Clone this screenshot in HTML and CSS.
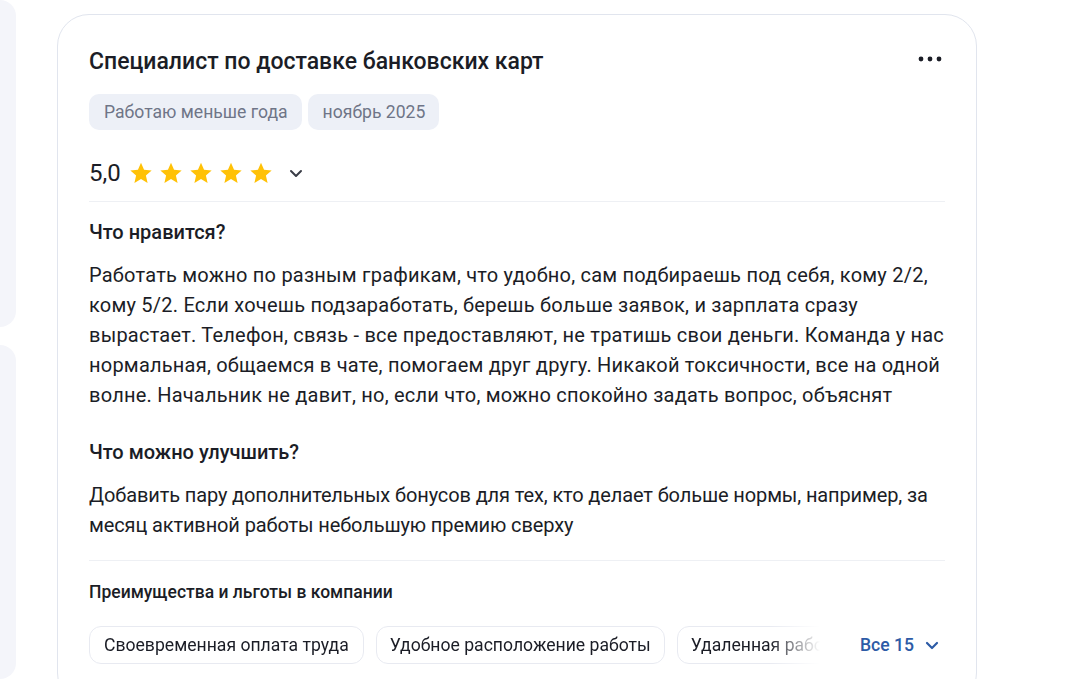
FILE: index.html
```html
<!DOCTYPE html>
<html lang="ru">
<head>
<meta charset="utf-8">
<link rel="stylesheet" href="styles.css">
</head>
<body>
<div class="page">
  <div class="side">
    <div class="side-card side-card-top"></div>
    <div class="side-card side-card-bottom"></div>
  </div>
  <div class="main">
    <article class="review">
      <header class="review-head">
        <h2 class="review-title">Специалист по доставке банковских карт</h2>
        <button class="more" aria-label="Ещё">
          <svg width="24" height="6" viewBox="0 0 24 6"><circle cx="3" cy="3" r="2.4" fill="#1b1d26"/><circle cx="12" cy="3" r="2.4" fill="#1b1d26"/><circle cx="21" cy="3" r="2.4" fill="#1b1d26"/></svg>
        </button>
      </header>
      <div class="tags">
        <span class="tag">Работаю меньше года</span>
        <span class="tag">ноябрь 2025</span>
      </div>
      <div class="rating">
        <span class="rating-value">5,0</span>
        <span class="stars">
          <svg class="star" viewBox="0 0 24 24"><path d="M12 1.8l3.05 7.03 7.6.68-5.75 5.02 1.7 7.47L12 18.1l-6.6 3.9 1.7-7.47-5.75-5.02 7.6-.68z" fill="#ffc107"/></svg>
          <svg class="star" viewBox="0 0 24 24"><path d="M12 1.8l3.05 7.03 7.6.68-5.75 5.02 1.7 7.47L12 18.1l-6.6 3.9 1.7-7.47-5.75-5.02 7.6-.68z" fill="#ffc107"/></svg>
          <svg class="star" viewBox="0 0 24 24"><path d="M12 1.8l3.05 7.03 7.6.68-5.75 5.02 1.7 7.47L12 18.1l-6.6 3.9 1.7-7.47-5.75-5.02 7.6-.68z" fill="#ffc107"/></svg>
          <svg class="star" viewBox="0 0 24 24"><path d="M12 1.8l3.05 7.03 7.6.68-5.75 5.02 1.7 7.47L12 18.1l-6.6 3.9 1.7-7.47-5.75-5.02 7.6-.68z" fill="#ffc107"/></svg>
          <svg class="star" viewBox="0 0 24 24"><path d="M12 1.8l3.05 7.03 7.6.68-5.75 5.02 1.7 7.47L12 18.1l-6.6 3.9 1.7-7.47-5.75-5.02 7.6-.68z" fill="#ffc107"/></svg>
        </span>
        <svg class="chev" width="14" height="9" viewBox="0 0 14 9"><path d="M2 2l5 5 5-5" fill="none" stroke="#3a3d47" stroke-width="2" stroke-linecap="round" stroke-linejoin="round"/></svg>
      </div>
      <hr class="sep">
      <h3 class="q">Что нравится?</h3>
      <p class="answer">Работать можно по разным графикам, что удобно, сам подбираешь под себя, кому 2/2, кому 5/2. Если хочешь подзаработать, берешь больше заявок, и зарплата сразу вырастает. Телефон, связь - все предоставляют, не тратишь свои деньги. Команда у нас нормальная, общаемся в чате, помогаем друг другу. Никакой токсичности, все на одной волне. Начальник не давит, но, если что, можно спокойно задать вопрос, объяснят</p>
      <h3 class="q q-second">Что можно улучшить?</h3>
      <p class="answer answer-tight">Добавить пару дополнительных бонусов для тех, кто делает больше нормы, например, за месяц активной работы небольшую премию сверху</p>
      <hr class="sep sep-bottom">
      <h4 class="benefits-title">Преимущества и льготы в компании</h4>
      <div class="benefits">
        <div class="chips">
          <span class="chip">Своевременная оплата труда</span>
          <span class="chip">Удобное расположение работы</span>
          <span class="chip">Удаленная работа</span>
        </div>
        <button class="all">Все 15
          <svg width="14" height="9" viewBox="0 0 14 9"><path d="M2 2l5 5 5-5" fill="none" stroke="#2d5ba6" stroke-width="2.2" stroke-linecap="round" stroke-linejoin="round"/></svg>
        </button>
      </div>
    </article>
  </div>
</div>
</body>
</html>
```
FILE: styles.css
```css
* { box-sizing: border-box; }
html, body { margin: 0; padding: 0; background: #fff; }
body {
  font-family: Roboto, "Noto Sans", "Liberation Sans", sans-serif;
  color: #1b1d26;
  height: 679px;
  overflow: hidden;
}
.page {
  display: flex;
  gap: 41px;
  height: 679px;
}
.side {
  width: 16px;
  display: flex;
  flex-direction: column;
  gap: 18px;
  flex-shrink: 0;
}
.side-card {
  background: #f4f5fa;
  border-radius: 0 16px 16px 0;
}
.side-card-top { height: 327px; }
.side-card-bottom { flex: 1; }
.main {
  padding-top: 14px;
}
.review {
  width: 920px;
  border: 1px solid #e1e5ee;
  border-radius: 32px;
  padding: 32px 31px 40px 31px;
  background: #fff;
}
.review-head {
  display: flex;
  justify-content: space-between;
  align-items: center;
}
.review-title {
  margin: 0;
  font-size: 23px;
  line-height: 30px;
  font-weight: 500;
}
.more {
  border: 0;
  background: none;
  padding: 0;
  margin-right: 3px;
  margin-top: -6px;
  display: flex;
}
.tags {
  display: flex;
  gap: 6px;
  margin-top: 17px;
}
.tag {
  background: #edf0f7;
  color: #6f7587;
  font-size: 17.6px;
  height: 36px;
  line-height: 36px;
  padding: 0 14px 0 15px;
  border-radius: 10px;
}
.rating {
  display: flex;
  align-items: center;
  height: 32px;
  margin-top: 27px;
}
.rating-value {
  font-size: 24px;
  font-weight: 400;
  margin-right: 8px;
}
.stars { display: flex; gap: 6px; }
.star { width: 24px; height: 24px; display: block; }
.chev { margin-left: 16px; }
.sep {
  border: 0;
  border-top: 1px solid #eef0f4;
  margin: 12px 0 0 0;
}
.q {
  margin: 18px 0 0 0;
  font-size: 20px;
  line-height: 24px;
  font-weight: 500;
}
.q-second { margin-top: 30px; }
.answer {
  margin: 16px 0 0 0;
  font-size: 20px;
  letter-spacing: 0.22px;
  line-height: 30px;
  font-weight: 400;
}
.answer-tight { letter-spacing: -0.12px; }
.sep-bottom { margin-top: 20px; }
.benefits-title {
  margin: 19px 0 0 0;
  font-size: 17.5px;
  line-height: 24px;
  font-weight: 500;
}
.benefits {
  display: flex;
  align-items: center;
  margin-top: 22px;
}
.chips {
  display: flex;
  gap: 12px;
  width: 731px;
  overflow: hidden;
  flex-shrink: 0;
  -webkit-mask-image: linear-gradient(to right, #000 680px, transparent 731px);
  mask-image: linear-gradient(to right, #000 680px, transparent 731px);
}
.chip {
  flex-shrink: 0;
  border: 1px solid #e8eaf1;
  border-radius: 12px;
  height: 38px;
  line-height: 36px;
  padding: 0 14px 0 14px;
  font-size: 17.6px;
  white-space: nowrap;
}
.chip + .chip { padding: 0 13px; }
.all {
  margin-left: 40px;
  border: 0;
  background: none;
  padding: 0;
  display: flex;
  align-items: center;
  gap: 11px;
  font-family: inherit;
  font-size: 17.6px;
  font-weight: 500;
  color: #2d5ba6;
}
```
